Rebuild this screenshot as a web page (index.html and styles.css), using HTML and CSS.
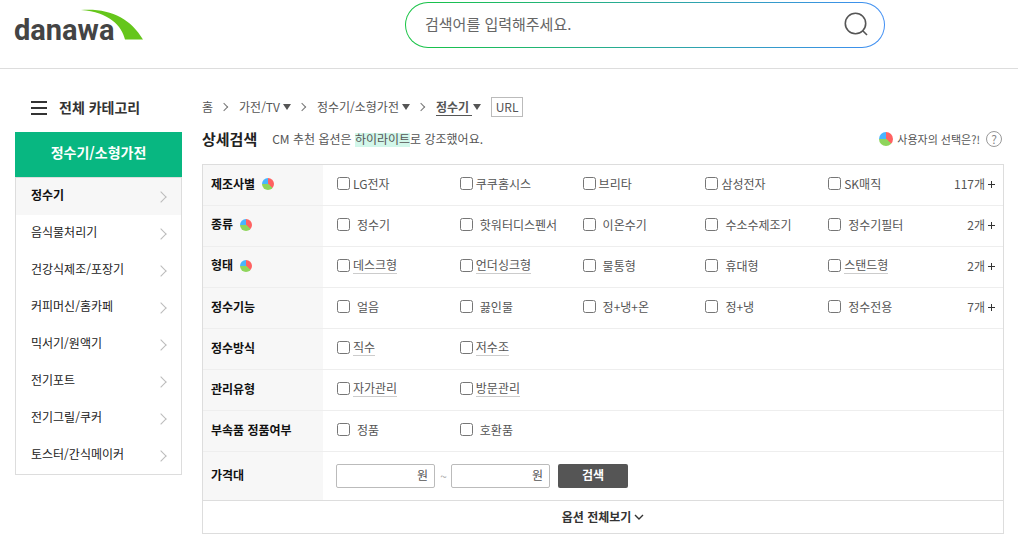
FILE: index.html
```html
<!DOCTYPE html>
<html lang="ko">
<head>
  <meta charset="UTF-8">
  <meta name="viewport" content="width=device-width, initial-scale=1.0">
  <title>정수기 : 다나와</title>
  <link rel="stylesheet" href="styles.css">
</head>
<body>

<header class="header">
  <a href="#" class="logo" aria-label="danawa">
    <svg width="130" height="36" viewBox="0 0 130 36">
      <text x="-1" y="33" class="logo-text">danawa</text>
      <path d="M66 3 C95 1 115 11 128 32.500 L110 32.500 C107 19 94 5 66 3 Z" fill="#65c61b"/>
    </svg>
  </a>
  <form class="search">
    <input type="text" class="search-input" placeholder="검색어를 입력해주세요." aria-label="검색어">
    <button type="button" class="search-btn" aria-label="검색">
      <svg width="26" height="26" viewBox="0 0 26 26" fill="none" stroke="#555" stroke-width="1.6">
        <circle cx="12.5" cy="11.5" r="10.2"/>
        <path d="M19.5 18.5 L24 23"/>
      </svg>
    </button>
  </form>
</header>

<div class="container">
  <aside class="sidebar">
    <button type="button" class="all-category">
      <svg width="16" height="14" viewBox="0 0 16 14" fill="#333">
        <path d="M0 0h16v2H0zM0 6h16v2H0zM0 12h16v2H0z"/>
      </svg>
      <span>전체 카테고리</span>
    </button>
    <h2 class="side-title">정수기/소형가전</h2>
    <ul class="side-list">
      <li class="on"><a href="#">정수기</a></li>
      <li><a href="#">음식물처리기</a></li>
      <li><a href="#">건강식제조/포장기</a></li>
      <li><a href="#">커피머신/홈카페</a></li>
      <li><a href="#">믹서기/원액기</a></li>
      <li><a href="#">전기포트</a></li>
      <li><a href="#">전기그릴/쿠커</a></li>
      <li><a href="#">토스터/간식메이커</a></li>
    </ul>
  </aside>

  <main class="main">
    <nav class="path">
      <a href="#">홈</a>
      <span class="sep"></span>
      <a href="#">가전/TV<i class="down"></i></a>
      <span class="sep"></span>
      <a href="#">정수기/소형가전<i class="down"></i></a>
      <span class="sep"></span>
      <a href="#" class="current"><b>정수기</b><i class="down"></i></a>
      <button type="button" class="url-btn">URL</button>
    </nav>

    <div class="title-row">
      <h1>상세검색</h1>
      <p>CM 추천 옵션은 <mark>하이라이트</mark>로 강조했어요.</p>
      <div class="user-choice">
        <i class="pie big"></i>
        <span>사용자의 선택은?!</span>
        <button type="button" class="help">?</button>
      </div>
    </div>

    <div class="option-box">
      <table class="option-table">
        <tr>
          <th scope="row">제조사별<i class="pie"></i></th>
          <td>
            <div class="options tight">
              <label><input type="checkbox"><span>LG전자</span></label>
              <label><input type="checkbox"><span>쿠쿠홈시스</span></label>
              <label><input type="checkbox"><span>브리타</span></label>
              <label><input type="checkbox"><span>삼성전자</span></label>
              <label><input type="checkbox"><span>SK매직</span></label>
              <button type="button" class="more">117개<i class="plus"></i></button>
            </div>
          </td>
        </tr>
        <tr>
          <th scope="row">종류<i class="pie"></i></th>
          <td>
            <div class="options">
              <label><input type="checkbox"><span>정수기</span></label>
              <label><input type="checkbox"><span>핫워터디스펜서</span></label>
              <label><input type="checkbox"><span>이온수기</span></label>
              <label><input type="checkbox"><span>수소수제조기</span></label>
              <label><input type="checkbox"><span>정수기필터</span></label>
              <button type="button" class="more">2개<i class="plus"></i></button>
            </div>
          </td>
        </tr>
        <tr>
          <th scope="row">형태<i class="pie"></i></th>
          <td>
            <div class="options">
              <label class="dic"><input type="checkbox"><span>데스크형</span></label>
              <label class="dic"><input type="checkbox"><span>언더싱크형</span></label>
              <label><input type="checkbox"><span>물통형</span></label>
              <label><input type="checkbox"><span>휴대형</span></label>
              <label class="dic"><input type="checkbox"><span>스탠드형</span></label>
              <button type="button" class="more">2개<i class="plus"></i></button>
            </div>
          </td>
        </tr>
        <tr>
          <th scope="row">정수기능</th>
          <td>
            <div class="options">
              <label><input type="checkbox"><span>얼음</span></label>
              <label><input type="checkbox"><span>끓인물</span></label>
              <label><input type="checkbox"><span>정+냉+온</span></label>
              <label><input type="checkbox"><span>정+냉</span></label>
              <label><input type="checkbox"><span>정수전용</span></label>
              <button type="button" class="more">7개<i class="plus"></i></button>
            </div>
          </td>
        </tr>
        <tr>
          <th scope="row">정수방식</th>
          <td>
            <div class="options">
              <label class="dic"><input type="checkbox"><span>직수</span></label>
              <label class="dic"><input type="checkbox"><span>저수조</span></label>
            </div>
          </td>
        </tr>
        <tr>
          <th scope="row">관리유형</th>
          <td>
            <div class="options">
              <label class="dic"><input type="checkbox"><span>자가관리</span></label>
              <label class="dic"><input type="checkbox"><span>방문관리</span></label>
            </div>
          </td>
        </tr>
        <tr>
          <th scope="row">부속품 정품여부</th>
          <td>
            <div class="options">
              <label><input type="checkbox"><span>정품</span></label>
              <label><input type="checkbox"><span>호환품</span></label>
            </div>
          </td>
        </tr>
        <tr class="price-row">
          <th scope="row">가격대</th>
          <td>
            <div class="price">
              <label class="price-field"><input type="text" aria-label="최소 가격"><span>원</span></label>
              <span class="tilde">~</span>
              <label class="price-field"><input type="text" aria-label="최대 가격"><span>원</span></label>
              <button type="button" class="price-btn">검색</button>
            </div>
          </td>
        </tr>
      </table>
      <button type="button" class="view-all">
        옵션 전체보기
        <svg width="10" height="6" viewBox="0 0 10 6" fill="none" stroke="#333" stroke-width="1.4"><path d="M1 1l4 4 4-4"/></svg>
      </button>
    </div>
  </main>
</div>

</body>
</html>
```

FILE: styles.css
```css
* {
  box-sizing: border-box;
}
body {
  margin: 0;
  font-family: "Noto Sans CJK KR", sans-serif;
  font-size: 12px;
  line-height: 18px;
  color: #555;
  background: #fff;
}
a {
  color: inherit;
  text-decoration: none;
}
button, input {
  font-family: inherit;
  font-size: inherit;
  line-height: inherit;
  color: inherit;
}
button {
  padding: 0;
  border: 0;
  background: none;
  cursor: pointer;
}
h1, h2, p, ul {
  margin: 0;
  padding: 0;
}

/* header */
.header {
  display: grid;
  grid-template-columns: 390px 480px;
  align-items: start;
  height: 69px;
  padding: 2px 15px 0;
  border-bottom: 1px solid #ddd;
}
.logo {
  padding-top: 5px;
}
.logo svg {
  display: block;
  overflow: visible;
}
.logo-text {
  font-family: Roboto, sans-serif;
  font-size: 29px;
  font-weight: bold;
  fill: #444;
}
.search {
  display: flex;
  align-items: center;
  height: 46px;
  padding: 0 15px 0 19px;
  border: 1px solid transparent;
  border-radius: 23px;
  background: linear-gradient(#fff, #fff) padding-box, linear-gradient(90deg, #16c442, #3f8ef5) border-box;
}
.search-input {
  flex: 1;
  padding: 0 0 2px;
  border: 0;
  outline: 0;
  background: none;
  font-size: 15px;
  line-height: 22px;
}
.search-input::placeholder {
  color: #666;
  opacity: 1;
}
.search-btn svg {
  display: block;
}

.container {
  display: flex;
  gap: 20px;
  padding: 0 14px 8px 15px;
}

/* sidebar */
.sidebar {
  flex: 0 0 167px;
}
.all-category {
  display: flex;
  align-items: center;
  gap: 12px;
  height: 63px;
  padding: 14px 0 0 16px;
  font-size: 14px;
  font-weight: bold;
  color: #333;
}
.all-category span {
  padding-bottom: 2px;
}
.side-title {
  height: 45px;
  background: #08b781;
  color: #fff;
  font-size: 14px;
  line-height: 40px;
  text-align: center;
}
.side-list {
  border: 1px solid #ddd;
  list-style: none;
}
.side-list a {
  display: flex;
  align-items: center;
  justify-content: space-between;
  height: 37px;
  padding: 0 16px 4px 15px;
  color: #222;
}
.side-list a::after {
  content: "";
  width: 7px;
  height: 7px;
  margin-top: 4px;
  border: solid #bbb;
  border-width: 1px 1px 0 0;
  transform: rotate(45deg);
}
.side-list .on a {
  background: #f7f7f7;
  font-weight: bold;
  color: #111;
}

/* main */
.main {
  flex: 1;
  min-width: 0;
  padding-top: 28px;
}
.path {
  display: flex;
  align-items: center;
  height: 20px;
}
.path a {
  display: flex;
  align-items: center;
}
.sep {
  width: 6px;
  height: 6px;
  margin: 0 12px 0 8px;
  border: solid #777;
  border-width: 1px 1px 0 0;
  transform: rotate(45deg);
}
.down {
  margin-left: 3px;
  border: 4px solid transparent;
  border-top: 6px solid #555;
  border-bottom: 0;
}
.current b {
  padding-right: 3px;
  border-bottom: 1px solid #555;
  line-height: 16px;
}
.current .down {
  margin-left: 1px;
}
.url-btn {
  width: 32px;
  height: 20px;
  margin-left: 10px;
  border: 1px solid #bbb;
  line-height: 16px;
}
.title-row {
  display: flex;
  align-items: center;
  height: 44px;
  margin-bottom: 3px;
}
.title-row h1 {
  margin-right: 15px;
  font-size: 15px;
  color: #222;
}
mark {
  background: linear-gradient(#d2f7ea, #d2f7ea) center bottom / 100% 14px no-repeat;
  color: inherit;
}
.user-choice {
  display: flex;
  align-items: center;
  gap: 4px;
  margin-left: auto;
  padding-right: 2px;
}
.user-choice span {
  font-size: 11px;
}
.pie {
  display: inline-block;
  width: 12px;
  height: 12px;
  margin: 0 0 3px 7px;
  border-radius: 50%;
  background: conic-gradient(#ff6262 0 135deg, #8fd55c 135deg 270deg, #47b5ff 270deg);
  vertical-align: middle;
}
.pie.big {
  width: 14px;
  height: 14px;
  margin: 0;
}
.help {
  width: 16px;
  height: 16px;
  margin-left: 2px;
  border: 1px solid #999;
  border-radius: 50%;
  color: #888;
  line-height: 14px;
}

/* option table */
.option-box {
  border: 1px solid #ddd;
}
.option-table {
  width: 100%;
  border-collapse: collapse;
}
.option-table tr {
  height: 41px;
  border-bottom: 1px solid #eee;
}
.option-table tr:first-child {
  height: 40px;
}
.option-table th {
  width: 120px;
  padding: 0 0 2px 8px;
  background: #f7f7f7;
  color: #111;
  text-align: left;
}
.option-table td {
  padding: 0 8px 0 14px;
}
.options {
  display: grid;
  grid-template-columns: repeat(5, 1fr) 44px;
  align-items: center;
  padding-bottom: 2px;
}
.options label {
  display: flex;
  align-items: center;
  gap: 7px;
}
.options input {
  width: 13px;
  height: 13px;
  margin: 0;
}
.options.tight label, .options .dic {
  gap: 3px;
}
.options .dic span {
  border-bottom: 1px solid #ccc;
  line-height: 16px;
}
.more {
  display: flex;
  align-items: center;
  justify-content: flex-end;
  gap: 3px;
}
.plus {
  width: 7px;
  height: 7px;
  margin-top: 2px;
  background: linear-gradient(#333, #333) center / 7px 1px no-repeat, linear-gradient(#333, #333) center / 1px 7px no-repeat;
}
.option-table .price-row {
  height: 49px;
  border-bottom-color: #ddd;
}
.price {
  display: flex;
  align-items: center;
}
.price-field {
  display: flex;
  align-items: center;
  width: 99px;
  height: 24px;
  margin-left: -1px;
  padding: 0 6px 2px 0;
  border: 1px solid #bbb;
  border-radius: 2px;
}
.price-field input {
  flex: 1;
  min-width: 0;
  height: 18px;
  border: 0;
  outline: 0;
}
.tilde {
  width: 17px;
  color: #aaa;
  text-align: center;
}
.price-btn {
  width: 70px;
  height: 24px;
  margin-left: 8px;
  padding-bottom: 2px;
  border-radius: 2px;
  background: #555;
  color: #fff;
  font-weight: bold;
}
.view-all {
  display: flex;
  align-items: center;
  justify-content: center;
  gap: 3px;
  width: 100%;
  height: 32px;
  font-weight: bold;
  color: #333;
}
```
